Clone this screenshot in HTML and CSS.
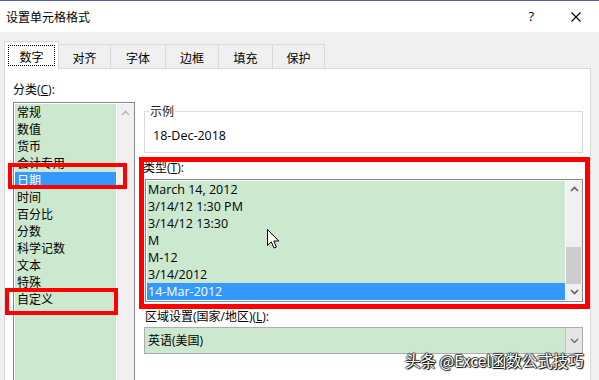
FILE: index.html
```html
<!DOCTYPE html>
<html lang="zh-CN">
<head>
<meta charset="utf-8">
<title>设置单元格格式</title>
<link rel="stylesheet" href="styles.css">
</head>
<body>
<div class="window">
  <div class="titlebar">
    <span class="title">设置单元格格式</span>
    <span class="help">?</span>
    <svg class="close" width="10" height="10" viewBox="0 0 10 10"><path d="M0.5 0.5 L9.5 9.5 M9.5 0.5 L0.5 9.5" stroke="#000" stroke-width="1.1" fill="none"/></svg>
  </div>
  <div class="main">
    <div class="tabs">
      <div class="tab active"><div class="focus">数字</div></div>
      <div class="tab w52">对齐</div>
      <div class="tab w55">字体</div>
      <div class="tab w53">边框</div>
      <div class="tab w54">填充</div>
      <div class="tab w52">保护</div>
    </div>
    <div class="panel">
      <div class="col-left">
        <div class="label cat-label">分类(<u>C</u>):</div>
        <div class="listbox cat">
          <ul class="items">
            <li>常规</li>
            <li>数值</li>
            <li>货币</li>
            <li>会计专用</li>
            <li class="sel">日期</li>
            <li>时间</li>
            <li>百分比</li>
            <li>分数</li>
            <li>科学记数</li>
            <li>文本</li>
            <li>特殊</li>
            <li>自定义</li>
          </ul>
          <div class="vscroll">
            <div class="sbtn"><svg width="9" height="6" viewBox="0 0 9 6"><path d="M1 5 L4.5 1.5 L8 5" stroke="#b8b8b8" stroke-width="1.6" fill="none"/></svg></div>
          </div>
        </div>
      </div>
      <div class="col-right">
        <div class="sample">
          <div class="legend">示例</div>
          <div class="sample-value">18-Dec-2018</div>
        </div>
        <div class="label type-label">类型(<u>T</u>):</div>
        <div class="listbox types">
          <ul class="items">
            <li>March 14, 2012</li>
            <li>3/14/12 1:30 PM</li>
            <li>3/14/12 13:30</li>
            <li>M</li>
            <li>M-12</li>
            <li>3/14/2012</li>
            <li class="sel">14-Mar-2012</li>
          </ul>
          <div class="vscroll">
            <div class="sbtn"><svg width="9" height="6" viewBox="0 0 9 6"><path d="M1 5 L4.5 1.5 L8 5" stroke="#606060" stroke-width="1.6" fill="none"/></svg></div>
            <div class="track"><div class="thumb"></div></div>
            <div class="sbtn"><svg width="9" height="6" viewBox="0 0 9 6"><path d="M1 1 L4.5 4.5 L8 1" stroke="#606060" stroke-width="1.6" fill="none"/></svg></div>
          </div>
        </div>
        <div class="label region-label">区域设置(国家/地区)(<u>L</u>):</div>
        <div class="combo">
          <span class="combo-text">英语(美国)</span>
          <div class="combo-btn"><svg width="9" height="6" viewBox="0 0 9 6"><path d="M1 1 L4.5 4.5 L8 1" stroke="#606060" stroke-width="1.2" fill="none"/></svg></div>
        </div>
      </div>
    </div>
  </div>
</div>
<div class="mark mark-date"></div>
<div class="mark mark-custom"></div>
<div class="mark mark-type"></div>
<svg class="cursor" width="13" height="20" viewBox="0 0 13 20"><path d="M0.5 0.5 L0.5 16.5 L4.3 12.8 L7 19 L9.4 18 L6.8 12 L11.8 12 Z" fill="#fff" stroke="#000" stroke-width="1" stroke-linejoin="miter"/></svg>
<div class="watermark">头条 @Excel函数公式技巧</div>
</body>
</html>
```
FILE: styles.css
```css
* { box-sizing: border-box; margin: 0; padding: 0; }
body {
  position: relative;
  width: 599px;
  height: 380px;
  overflow: hidden;
  background: #f0f0f0;
  font-family: "Open Sans", "Noto Sans CJK SC", sans-serif;
  font-size: 12px;
  line-height: 17px;
  color: #000;
}
.window { height: 380px; border-top: 1px solid #5b5ba6; }
.titlebar {
  height: 31px;
  background: #fff;
  display: flex;
  align-items: center;
  padding: 0 18px 0 6px;
}
.title { flex: 1; font-family: "Noto Sans CJK SC", sans-serif; font-size: 12px; }
.help { font-size: 13px; margin-right: 37px; }
.close { display: block; }

.main { padding: 9px 0 0 4px; }
.tabs { display: flex; align-items: flex-end; height: 27px; }
.tab {
  height: 24px;
  border-top: 1px solid #d9d9d9;
  border-right: 1px solid #d9d9d9;
  text-align: center;
  padding-top: 4px;
  font-family: "Noto Sans CJK SC", sans-serif;
}
.w52 { width: 52px; }
.w53 { width: 53px; }
.w54 { width: 54px; }
.w55 { width: 55px; }
.tab.active {
  align-self: flex-start;
  position: relative;
  z-index: 1;
  width: 55px;
  height: 28px;
  border: 1px solid #d9d9d9;
  border-bottom: none;
  background: #fff;
  padding: 3px 3px 0 3px;
}
.focus { height: 21px; border: 1px dotted #000; padding-top: 2px; }

.panel {
  width: 587px;
  height: 312px;
  background: #fff;
  border: 1px solid #d9d9d9;
  border-bottom: none;
  display: flex;
  padding: 0 7px 0 8px;
}
.col-left { width: 122px; }
.col-right { width: 439px; margin-left: 9px; }
.label { height: 17px; white-space: nowrap; }
.cat-label { margin-top: 12px; }

.listbox {
  display: flex;
  border: 1px solid #828790;
  padding: 1px 0 1px 1px;
  background: #fff;
}
.items { list-style: none; background: #cce8cf; }
.items li { height: 17px; padding-left: 2px; white-space: nowrap; }
.items li.sel { background: #3399ff; color: #fff; }
.vscroll { margin-left: 1px; background: #f0f0f0; display: flex; flex-direction: column; }
.sbtn { height: 17px; display: flex; align-items: center; justify-content: center; }
.sbtn svg { display: block; }

.cat { margin-top: 4px; height: 278px; border-bottom: none; padding-bottom: 0; }
.cat .items { width: 101px; }
.cat .vscroll { width: 17px; }

.sample {
  margin-top: 42px;
  height: 42px;
  border: 1px solid #dcdcdc;
}
.legend {
  width: max-content;
  margin: -9px 0 0 4px;
  padding: 0 1px;
  background: #fff;
  color: #1a1a1a;
}
.sample-value { margin-top: 7px; padding-left: 8px; font-size: 12.5px; }
.type-label { margin: 6px 0 0 -1px; }
.types { margin: 3px 0 0 1px; width: 438px; height: 123px; }
.types .items { width: 418px; font-size: 12.5px; }
.types .items li { padding-left: 1px; }
.types .vscroll { width: 16px; }
.track { flex: 1; }
.thumb { margin-top: 49px; height: 37px; width: 15px; background: #cdcdcd; }
.region-label { margin: 6px 0 0 1px; }
.combo {
  margin-top: 2px;
  height: 27px;
  border: 1px solid #adadad;
  background: #cce8cf;
  display: flex;
}
.combo-text { flex: 1; padding-left: 3px; line-height: 25px; }
.combo-btn {
  width: 17px;
  background: #e5e5e5;
  border-left: 1px solid #c4c4c4;
  display: flex;
  align-items: center;
  justify-content: center;
}

.mark { position: absolute; border: 4px solid #ff0000; }
.mark-date { left: 8px; top: 163px; width: 119px; height: 26px; }
.mark-custom { left: 5px; top: 288px; width: 113px; height: 27px; }
.mark-type { left: 139px; top: 157px; width: 451px; height: 152px; border-width: 5px; }
.cursor { position: absolute; left: 267px; top: 229px; }
.watermark {
  position: absolute;
  left: 405px;
  top: 350px;
  font-family: "Noto Sans CJK SC", sans-serif;
  font-size: 15.5px;
  line-height: 21px;
  color: #fff;
  text-shadow: 1px 1px 1px #000, -1px 0 1px #333, 0 -1px 1px #333, 1px 0 1px #222;
  white-space: nowrap;
}
```
